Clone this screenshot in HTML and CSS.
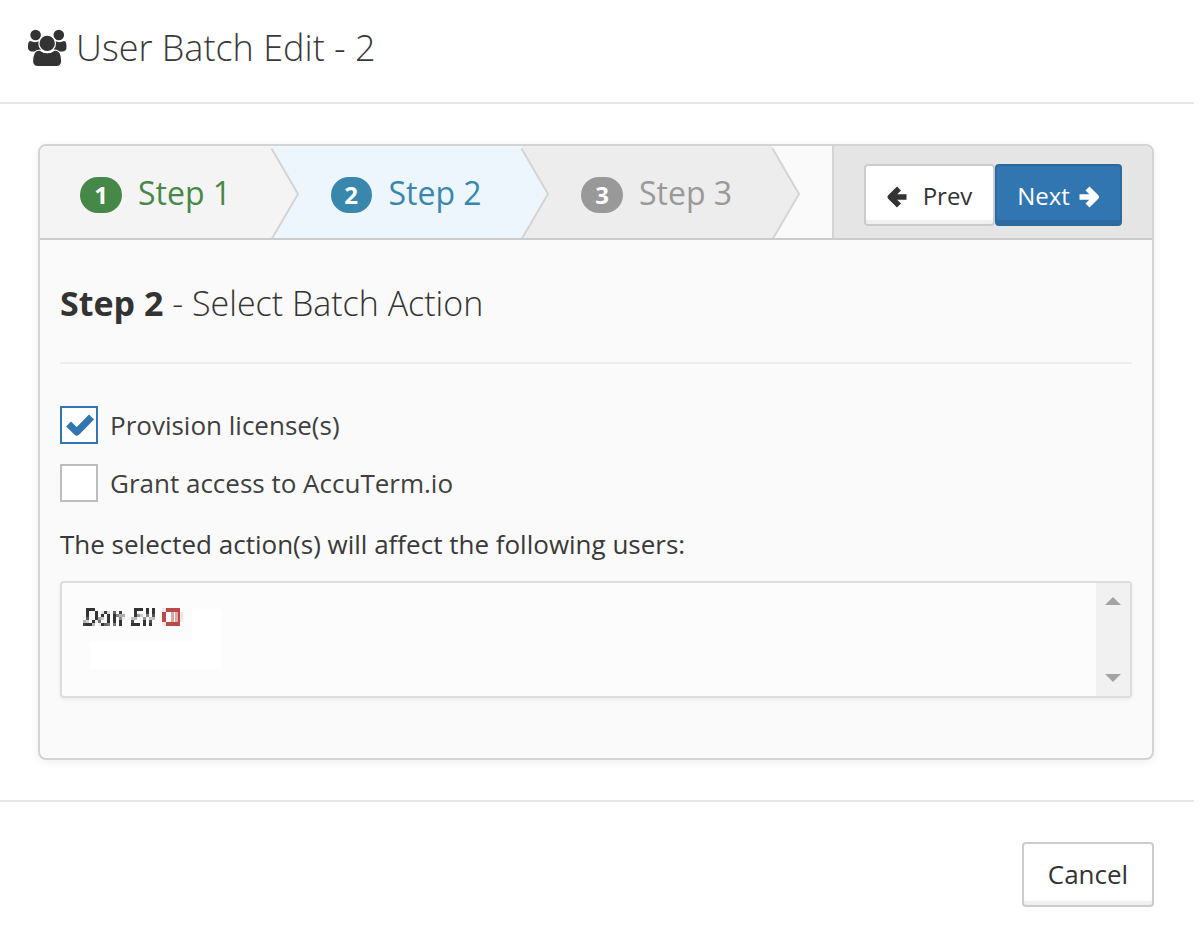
FILE: index.html
```html
<!DOCTYPE html>
<html lang="en">
<head>
<meta charset="utf-8">
<title>User Batch Edit</title>
<link rel="stylesheet" href="styles.css">
</head>
<body>
<div class="modal">
  <header class="modal-header">
    <svg class="users-icon" viewBox="0 0 40 38" width="40" height="38">
      <circle cx="8.600" cy="6" r="5.300"/><circle cx="31.800" cy="6" r="5.300"/>
      <path d="M3.500 12C6 13.500 10 13.500 12.500 12L14 21H11L8.500 22.500H4.500C2 22 1 20.500 1 18.500C1 15 1.200 12 3.500 12zM37 12C34.500 13.500 30.500 13.500 28 12L26.500 21H29.500L32 22.500H36C38.500 22 39.500 20.500 39.500 18.500C39.500 15 39.300 12 37 12z"/>
      <circle cx="20.200" cy="14.400" r="8.300" class="gap"/>
      <path class="gap" d="M12.800 21C17 24.500 23.500 24.500 27.700 21C33 21 34.700 27 34.700 32C34.700 36 32.500 37.600 29.500 37.600H11C7.500 37.600 5.500 36 5.500 32C5.500 27 7 21 12.800 21z"/>
    </svg>
    <h1 class="title">User Batch Edit - 2</h1>
  </header>
  <main class="modal-body">
    <section class="wizard">
      <div class="wizard-bar">
        <svg class="bands" width="792" height="92" viewBox="0 0 792 92">
          <path class="band-wait" d="M482 0H732L759 48L733 92H482z"/>
          <path class="band-active" d="M232 0H481L508 48L482 92H232z"/>
          <path class="band-done" d="M0 0H231L258 48L232 92H0z"/>
          <path class="edge" d="M231.500 2.500L258 48L232 92.500M481.500 2.500L508 48L482 92.500M732.500 2.500L759 48L733 92.500"/>
        </svg>
        <ol class="steps">
          <li class="step done"><span class="badge">1</span><span class="step-name">Step 1</span></li>
          <li class="step active"><span class="badge">2</span><span class="step-name">Step 2</span></li>
          <li class="step"><span class="badge">3</span><span class="step-name">Step 3</span></li>
        </ol>
        <div class="actions">
          <button class="btn prev"><svg width="21" height="22" viewBox="0 0 21 22"><path d="M12 2.400L3.400 11L12 19.600M4.500 11H19.500"/></svg><span>Prev</span></button>
          <button class="btn next"><span>Next</span><svg width="22" height="22" viewBox="0 0 22 22"><path d="M9.500 2.400L18.100 11L9.500 19.600M17 11H1.500"/></svg></button>
        </div>
      </div>
      <div class="wizard-content">
        <h2 class="heading"><b>Step 2</b> - Select Batch Action</h2>
        <label class="check checked"><span class="box"><svg width="34" height="34" viewBox="0 0 34 34"><path d="M6.500 16L14.800 24L29.500 9"/></svg></span>Provision license(s)</label>
        <label class="check"><span class="box"></span>Grant access to AccuTerm.io</label>
        <p class="note">The selected action(s) will affect the following users:</p>
        <div class="users">
          <div class="user-list">
            <svg class="masked" width="160" height="88" viewBox="0 0 160 88">
              <defs>
                <filter id="mosaic" filterUnits="userSpaceOnUse" x="21" y="25" width="105" height="21" color-interpolation-filters="sRGB">
                  <feFlood x="22" y="26" width="1" height="1" flood-color="#000"/>
                  <feOffset x="21" y="25" width="3" height="3"/>
                  <feTile x="21" y="25" width="105" height="21" result="dots"/>
                  <feGaussianBlur in="SourceGraphic" stdDeviation="0.5" result="soft"/>
                  <feComposite in="soft" in2="dots" operator="in"/>
                  <feMorphology operator="dilate" radius="1"/>
                </filter>
              </defs>
              <path class="blank" d="M130 26h29.500v60H28V58h102z"/>
              <text x="21" y="43" class="user-name" textLength="72" lengthAdjust="spacingAndGlyphs" filter="url(#mosaic)">Dan Ell</text>
              <g shape-rendering="crispEdges"><path class="ban" d="M104 25h14v4h-14zM104 39h14v4h-14zM100 29h4v10h-4zM116 29h2v10h-2z"/><path class="ban-light" d="M100 25h4v4h-4zM100 39h4v4h-4zM118 29h3v10h-3z"/><path class="ban-mid" d="M109 29h3v10h-3zM113 29h3v10h-3z"/></g>
            </svg>
          </div>
          <div class="scroll"><i class="up"></i><i class="down"></i></div>
        </div>
      </div>
    </section>
  </main>
  <footer class="modal-footer"><button class="btn cancel">Cancel</button></footer>
</div>
</body>
</html>
```
FILE: styles.css
```css
* { box-sizing: border-box; }
body { margin: 0; background: #fff; color: #393939; font-family: "Open Sans", sans-serif; font-size: 26px; }
.modal { width: 1194px; }
.modal-header { height: 104px; border-bottom: 2px solid #e5e5e5; display: flex; align-items: flex-start; padding: 29px 0 0 27px; }
.users-icon { fill: #333; flex: none; }
.gap { stroke: #fff; stroke-width: 1.2px; }
.title { margin: -6px 0 0 9px; font-size: 36px; line-height: 50px; font-weight: 300; white-space: nowrap; }
.modal-body { padding: 40px 40px 40px 38px; }
.wizard { height: 616px; border: 2px solid #d4d4d4; border-radius: 8px; background: #fafafa; box-shadow: 0 2px 10px rgba(0,0,0,.07); overflow: hidden; }
.wizard-bar { height: 94px; border-bottom: 2px solid #ccc; display: flex; position: relative; }
.bands { position: absolute; left: 0; top: 0; }
.band-done { fill: #f4f4f4; }
.band-active { fill: #edf6fc; }
.band-wait { fill: #ededed; }
.edge { fill: none; stroke: #d4d4d4; stroke-width: 2; }
.steps { position: relative; width: 792px; margin: 0; padding: 0 0 0 40px; list-style: none; display: flex; }
.step { width: 250.5px; display: flex; align-items: center; gap: 16px; color: #999; }
.step-name { padding-top: 2px; font-size: 32px; line-height: 44px; white-space: nowrap; }
.badge { width: 42px; height: 36px; margin-top: 6px; border-radius: 18px; background: #999; color: #fff; font-size: 24px; font-weight: 700; line-height: 36px; text-align: center; }
.done { color: #468847; }
.done .badge { background: #468847; }
.active { color: #3a87ad; }
.active .badge { background: #3a87ad; width: 41px; margin-right: 1px; }
.actions { flex: 1; border-left: 2px solid #d4d4d4; background: #e5e5e5; padding: 18px 0 0 30px; display: flex; align-items: flex-start; }
.btn { font-family: inherit; font-size: 24px; color: #333; background: #fff; border: 2px solid #ccc; border-radius: 4px; box-shadow: inset 0 -4px 0 #f0f0f0; padding: 0; display: flex; align-items: center; justify-content: center; height: 62px; }
.btn svg { fill: none; stroke: currentColor; stroke-width: 5.6; margin-top: 4px; }
.btn path { stroke-linejoin: round; }
.prev { width: 131px; gap: 15px; }
.next { width: 127px; gap: 8px; color: #fff; background: #3276b1; border-color: #2c699d; box-shadow: inset 0 -4px 0 #2d6a9f; }
.wizard-content { padding: 0 20px; }
.heading { margin: 0 0 42px; height: 124px; padding-top: 39px; border-bottom: 2px solid #eee; font-size: 34px; line-height: 48px; font-weight: 300; white-space: nowrap; color: #333; }
.heading b { font-weight: 700; }
.check { display: flex; align-items: center; height: 38px; margin-bottom: 20px; color: #404040; }
.box { width: 38px; height: 38px; margin-right: 12px; border: 2px solid #bdbdbd; background: #fff; }
.box svg { display: block; fill: none; stroke: #3276b1; stroke-width: 7; stroke-linejoin: round; }
.checked .box { border-color: #3276b1; }
.note { margin: 23px 0 18px; line-height: 38px; white-space: nowrap; }
.users { height: 117px; border: 2px solid #ddd; border-radius: 4px; box-shadow: 0 2px 4px rgba(0,0,0,.06); display: flex; background: #fcfcfc; }
.user-list { flex: 1; }
.masked { display: block; }
.blank { fill: #fff; }
.user-name { font-size: 25px; font-style: italic; font-weight: 600; fill: #333; }
.ban { fill: #b94a48; }
.ban-light { fill: #f5e5e5; }
.ban-mid { fill: #dea8a7; }
.scroll { width: 34px; background: #f1f1f1; display: flex; flex-direction: column; align-items: center; justify-content: space-between; padding: 14px 0; }
.up, .down { border: 8px solid transparent; border-top-width: 0; border-bottom: 8px solid #a3a3a3; }
.down { border-bottom: 0; border-top: 8px solid #a3a3a3; }
.modal-footer { border-top: 2px solid #e5e5e5; padding: 40px 40px 0; display: flex; justify-content: flex-end; }
.cancel { width: 132px; height: 65px; font-size: 26px; padding-bottom: 2px; }
```
